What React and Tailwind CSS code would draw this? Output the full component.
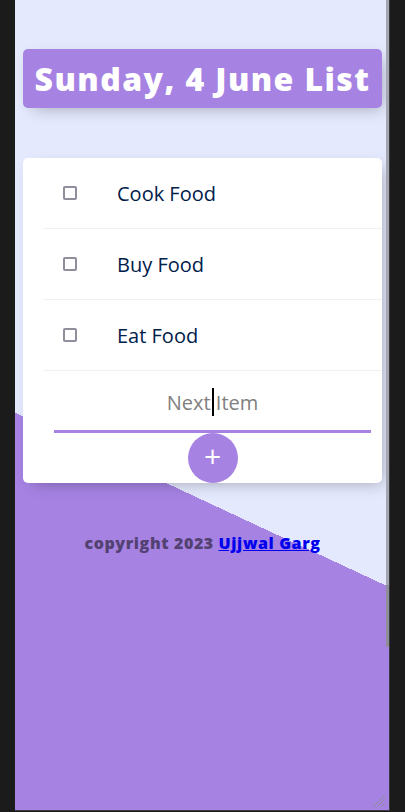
const items = ["Cook Food", "Buy Food", "Eat Food"];

function Row({ label }) {
  return (
    <div className="ml-5 min-h-[71px] flex items-center border-b border-[#f1f1f1]">
      <span className="block w-[14px] h-[14px] m-5 mr-5 rounded-[2px] border-2 border-[#8f8f9b] bg-white shrink-0" />
      <p className="p-5 text-[20px] leading-[27px] text-[#00204a] font-['Open_Sans',sans-serif]">{label}</p>
    </div>
  );
}

export default function App() {
  return (
    <div className="w-[405px] h-[812px] bg-[#1b1b1b] px-[15px] overflow-hidden">
      <div className="relative h-[810px] overflow-hidden">
        <div className="min-h-[1000px] bg-[linear-gradient(25deg,#a683e3_50%,#e4e9fd_50%)] px-2 pt-[49px]">
          {/* heading */}
          <div className="bg-[#a683e3] rounded-[5px] text-center shadow-[5px_5px_15px_-5px_rgba(0,0,0,0.3)]">
            <h1 className="p-[10px] text-white text-[32px] leading-[39px] font-extrabold tracking-[1.4px] font-['Open_Sans',sans-serif]">
              Sunday, 4 June List
            </h1>
          </div>

          {/* list card */}
          <div className="mt-[50px] bg-white rounded-[5px] shadow-[5px_5px_15px_-5px_rgba(0,0,0,0.3)]">
            {items.map((it) => (
              <Row key={it} label={it} />
            ))}
            <form className="ml-5 pt-[2px] flex flex-col items-center">
              <div className="relative w-[317px] h-[60px] flex items-center justify-center shadow-[inset_0_-3px_0_0_#a683e3] text-[20px] text-[#808080] font-['Open_Sans',sans-serif]">
                Next Item
                <span className="absolute left-[158px] top-[15px] w-[2px] h-[28px] bg-black" />
              </div>
              <button
                type="button"
                className="w-[50px] h-[50px] rounded-full bg-[#a683e3] text-white text-[30px] leading-none pb-[5px] flex items-center justify-center font-['Open_Sans',sans-serif]"
              >
                +
              </button>
            </form>
          </div>

          <footer className="mt-[49px] text-center text-[16px] leading-[22px] font-extrabold tracking-[0.6px] text-[#534171] font-['Open_Sans',sans-serif]">
            copyright 2023{" "}
            <a className="text-[#0000ee] underline">Ujjwal Garg</a>
          </footer>
        </div>

        {/* overlay scrollbar */}
        <div className="absolute top-0 right-0 w-[4px] h-full flex">
          <div className="w-[3px] h-full flex flex-col">
            <div className="h-[585px] bg-[#a6a6b0]" />
            <div className="h-[62px] bg-[#8e8e98]" />
          </div>
          <div className="w-[1px] h-full bg-[#3a3a42]" />
        </div>

        {/* resize grip */}
        <svg className="absolute right-[4px] bottom-[2px]" width="14" height="14" viewBox="0 0 14 14">
          <path d="M13 1 L1 13 M13 5 L5 13 M13 9 L9 13" stroke="#8c8c96" strokeWidth="1" />
        </svg>
      </div>
      <div className="h-[1px] bg-[#3a3a42]" />
    </div>
  );
}
